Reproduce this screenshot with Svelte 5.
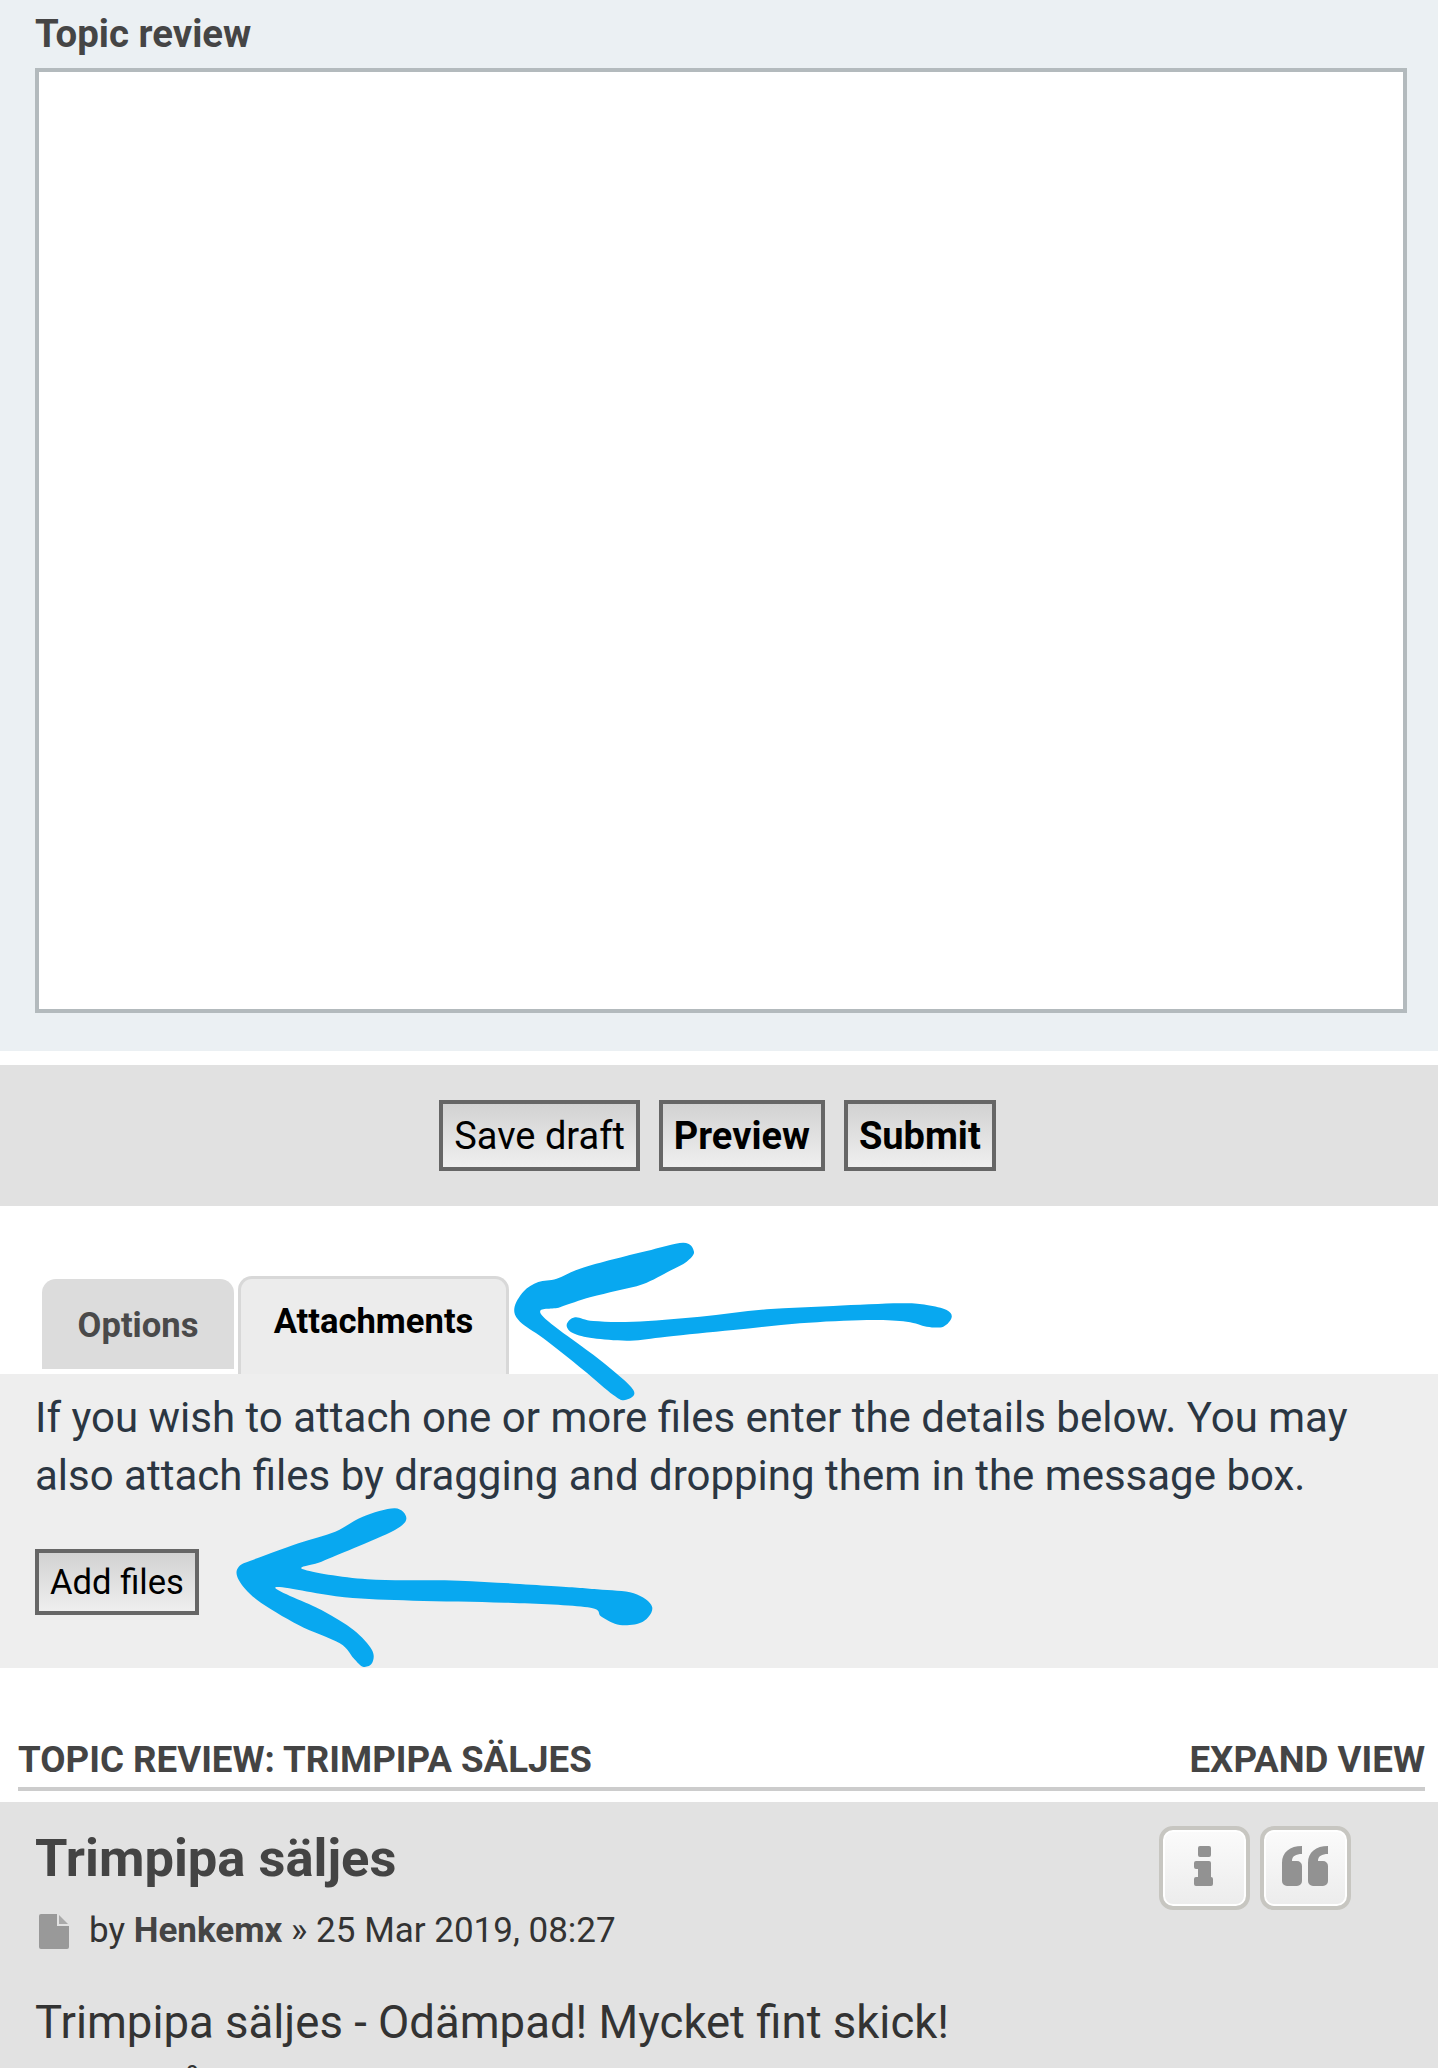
<script>
  function blob(p) {
    const n = p.length;
    let d = `M${p[0][0]} ${p[0][1]}`;
    for (let i = 0; i < n; i++) {
      const a = p[(i - 1 + n) % n], b = p[i], c = p[(i + 1) % n], e = p[(i + 2) % n];
      const c1 = [b[0] + (c[0] - a[0]) / 6, b[1] + (c[1] - a[1]) / 6];
      const c2 = [c[0] - (e[0] - b[0]) / 6, c[1] - (e[1] - b[1]) / 6];
      d += `C${c1[0]} ${c1[1]} ${c2[0]} ${c2[1]} ${c[0]} ${c[1]}`;
    }
    return d + 'Z';
  }
  const head1 = blob([[550,68],[582,95],[560,125],[510,152],[430,192],[350,212],[270,232],[180,262],[125,285],[300,420],[400,510],[375,540],[340,525],[250,450],[130,355],[60,305],[43,265],[70,215],[115,186],[170,176],[240,146],[340,118],[440,93]]);
  const shaft1 = blob([[225,292],[280,303],[400,305],[600,290],[800,268],[1000,258],[1200,250],[1280,255],[1340,270],[1355,292],[1330,320],[1280,320],[1220,305],[1100,300],[900,310],[700,330],[500,350],[390,362],[280,355],[220,340],[200,315]]);
  const arrow2 = blob([[860,385],[885,415],[860,450],[770,505],[700,545],[660,568],[800,598],[1000,602],[1200,618],[1300,628],[1380,640],[1420,680],[1400,725],[1350,735],[1310,710],[1280,682],[1100,668],[900,662],[750,652],[600,622],[700,690],[770,750],[810,810],[810,850],[790,860],[770,835],[740,790],[650,735],[560,660],[520,600],[520,560],[560,535],[650,490],[730,455],[790,410]]);
</script>

<style>
:global(body) { margin: 0; background: #fff; }
.page {
  position: relative;
  width: 1438px;
  height: 2068px;
  overflow: hidden;
  font-family: Roboto, "Liberation Sans", sans-serif;
  color: #2b3640;
}
.review { height: 1051px; background: #ebf0f3; padding: 0 31px 0 35px; box-sizing: border-box; }
.review h3 { margin: 0; height: 68px; font-size: 38.4px; line-height: 68px; font-weight: 700; color: #454545; }
.box { height: 945px; border: 4px solid #b3babd; background: #fff; box-sizing: border-box; }
.submit {
  margin-top: 14px; height: 141px; background: #e1e1e1;
  display: flex; justify-content: center; align-items: center; gap: 19px;
  padding-right: 3px;
}
.btn {
  display: block; box-sizing: border-box; height: 71px; border: 4px solid #666;
  background: linear-gradient(#d2d2d2, #efefef); color: #000;
  font: 400 38px/65px Roboto, sans-serif; padding: 0 11px;
}
.btn.b { font-weight: 700; }
.tabs { height: 168px; display: flex; align-items: flex-end; padding-left: 42px; gap: 4px; }
.tab { box-sizing: border-box; display: flex; align-items: center; justify-content: center; font-size: 34.6px; font-weight: 700; }
.tab.off { width: 192px; height: 90px; margin-bottom: 5px; background: #dcdcdc; color: #4a4a4a; border-radius: 14px 14px 0 0; padding-top: 2px; }
.tab.on { width: 271px; height: 98px; background: #ececec; color: #000; border: 3px solid #d8d8d8; border-bottom: 0; border-radius: 14px 14px 0 0; padding-bottom: 12px; }
.attach { height: 294px; background: #eeeeee; padding: 15px 36px 0 35px; box-sizing: border-box; }
.attach p { margin: 0; font-size: 42px; line-height: 58px; color: #2b3642; }
.add {
  display: inline-block; box-sizing: border-box; height: 66px; margin-top: 44px; border: 4px solid #666;
  background: linear-gradient(#d2d2d2, #efefef); color: #000; font-size: 34.6px; line-height: 58px; padding: 0 11px;
}
.head {
  margin: 0 13px 0 18px; height: 123px; box-sizing: border-box; border-bottom: 4px solid #cccccc;
  display: flex; justify-content: space-between; align-items: flex-end;
  font-size: 36.7px; font-weight: 700; color: #444; line-height: 44px; padding-bottom: 5px;
}
.card { position: relative; margin-top: 11px; height: 266px; background: #e2e2e2; padding: 0 35px; box-sizing: border-box; overflow: hidden; }
.card h2 { margin: 0; font-size: 52.5px; font-weight: 700; line-height: 60px; padding-top: 26px; color: #444; }
.meta { display: flex; align-items: center; height: 40px; margin-top: 23px; font-size: 35px; color: #333; line-height: 40px; }
.meta svg { margin: 0 20px 0 4px; }
.meta b { font-weight: 700; color: #444; }
.body { margin: 40px 0 0; font-size: 45.5px; line-height: 64px; color: #333; white-space: nowrap; }
.tools { position: absolute; top: 24px; left: 1159px; display: flex; gap: 10px; }
.tool {
  box-sizing: border-box; width: 91px; height: 84px; border: 4px solid #c7c6c1; border-radius: 14px;
  background: linear-gradient(#fbfbfb, #ececec); box-shadow: inset 0 0 0 2px #fff;
  display: flex; align-items: center; justify-content: center;
  padding: 0 2px 4px 0;
}
.ink { position: absolute; inset: 0; pointer-events: none; }
.ink path { fill: #08a8f0; }
</style>

<div class="page">
  <section class="review">
    <h3>Topic review</h3>
    <div class="box"></div>
  </section>

  <div class="submit">
    <span class="btn">Save draft</span>
    <span class="btn b">Preview</span>
    <span class="btn b">Submit</span>
  </div>

  <div class="tabs">
    <div class="tab off">Options</div>
    <div class="tab on">Attachments</div>
  </div>

  <section class="attach">
    <p>If you wish to attach one or more files enter the details below. You may also attach files by dragging and dropping them in the message box.</p>
    <span class="add">Add files</span>
  </section>

  <div class="head">
    <span>TOPIC REVIEW: TRIMPIPA SÄLJES</span>
    <span>EXPAND VIEW</span>
  </div>

  <article class="card">
    <h2>Trimpipa säljes</h2>
    <div class="meta">
      <svg width="30" height="35" viewBox="0 0 30 35"><path d="M2 0H18V12H30V33a2 2 0 0 1-2 2H2a2 2 0 0 1-2-2V2a2 2 0 0 1 2-2Z" fill="#999"/><path d="M20 1L29 10H20Z" fill="#aaa"/></svg>
      <span>by <b>Henkemx</b> » 25 Mar 2019, 08:27</span>
    </div>
    <p class="body">Trimpipa säljes - Odämpad! Mycket fint skick!<br>Sitter på min Ayat Fire Dragon</p>
    <div class="tools">
      <div class="tool">
        <svg width="19" height="40" viewBox="0 0 19 40"><path d="M6 0H15a2 2 0 0 1 2 2V9a2 2 0 0 1-2 2H6A2 2 0 0 1 4 9V2A2 2 0 0 1 6 0ZM2 15H15a2 2 0 0 1 2 2V31h0a2 2 0 0 1 2 2V38a2 2 0 0 1-2 2H2a2 2 0 0 1-2-2V33a2 2 0 0 1 2-2H4V23H2a2 2 0 0 1-2-2V17a2 2 0 0 1 2-2Z" fill="#929292"/></svg>
      </div>
      <div class="tool">
        <svg width="46" height="40" viewBox="0 0 46 40"><path d="M20 0V8C14 8 10 10 10 15H15a5 5 0 0 1 5 5V35a5 5 0 0 1-5 5H5a5 5 0 0 1-5-5V17C0 6 8 0 20 0ZM46 0V8C40 8 36 10 36 15H41a5 5 0 0 1 5 5V35a5 5 0 0 1-5 5H31a5 5 0 0 1-5-5V17C26 6 34 0 46 0Z" fill="#929292"/></svg>
      </div>
    </div>
  </article>

  <svg class="ink" width="1438" height="2068" viewBox="0 0 1438 2068">
    <g transform="translate(500 1220) scale(0.33333)">
      <path d={head1}/>
      <path d={shaft1}/>
    </g>
    <g transform="translate(0 1380) scale(0.4592 0.33333)">
      <path d={arrow2}/>
    </g>
  </svg>
</div>
